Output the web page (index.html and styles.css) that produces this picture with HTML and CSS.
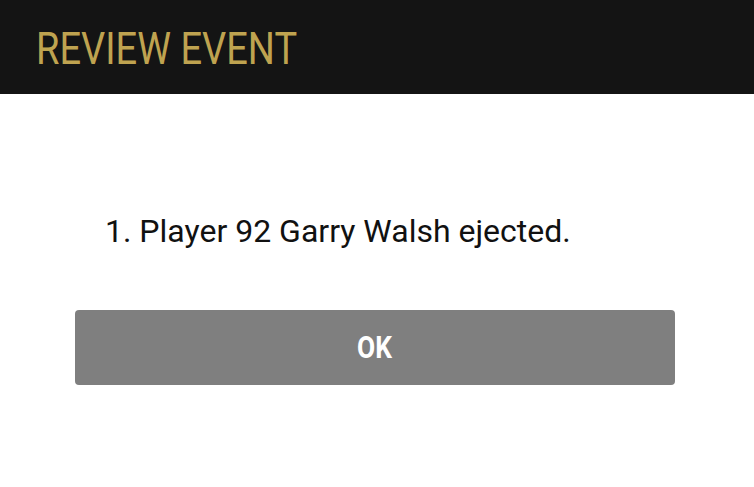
FILE: index.html
```html
<!DOCTYPE html>
<html>
<head>
<meta charset="utf-8">
<link rel="stylesheet" href="styles.css">
</head>
<body>
<header class="header">
  <h1 class="title">REVIEW EVENT</h1>
</header>
<main class="content">
  <ol class="events">
    <li class="event">Player 92 Garry Walsh ejected.</li>
  </ol>
  <button class="ok-btn"><span class="ok-label">OK</span></button>
</main>
</body>
</html>
```
FILE: styles.css
```css
html, body {
  margin: 0;
  padding: 0;
  background: #ffffff;
  font-family: Roboto, "Liberation Sans", sans-serif;
}
.header {
  height: 94px;
  background: #141414;
  display: flex;
  align-items: center;
  padding-left: 36px;
  box-sizing: border-box;
}
.title {
  margin: 0;
  font-family: Roboto, sans-serif;
  font-weight: 400;
  font-size: 45px;
  line-height: 1;
  color: #bfa350;
  transform: scaleX(0.845);
  transform-origin: left center;
  white-space: nowrap;
  padding-top: 2px;
}
.content {
  padding: 117px 0 0 75px;
}
.events {
  margin: 0;
  padding: 0 0 0 30px;
  list-style: none;
}
.event {
  font-size: 32px;
  line-height: 40px;
  color: #111111;
}
.event::before {
  content: "1. ";
}
.ok-btn {
  display: flex;
  align-items: center;
  justify-content: center;
  margin-top: 59px;
  width: 600px;
  height: 75px;
  border: none;
  border-radius: 4px;
  background: #7f7f7f;
  padding: 0;
}
.ok-label {
  font-family: Roboto, sans-serif;
  font-weight: 700;
  font-size: 31px;
  color: #ffffff;
  transform: scaleX(0.85);
  display: inline-block;
}
```
